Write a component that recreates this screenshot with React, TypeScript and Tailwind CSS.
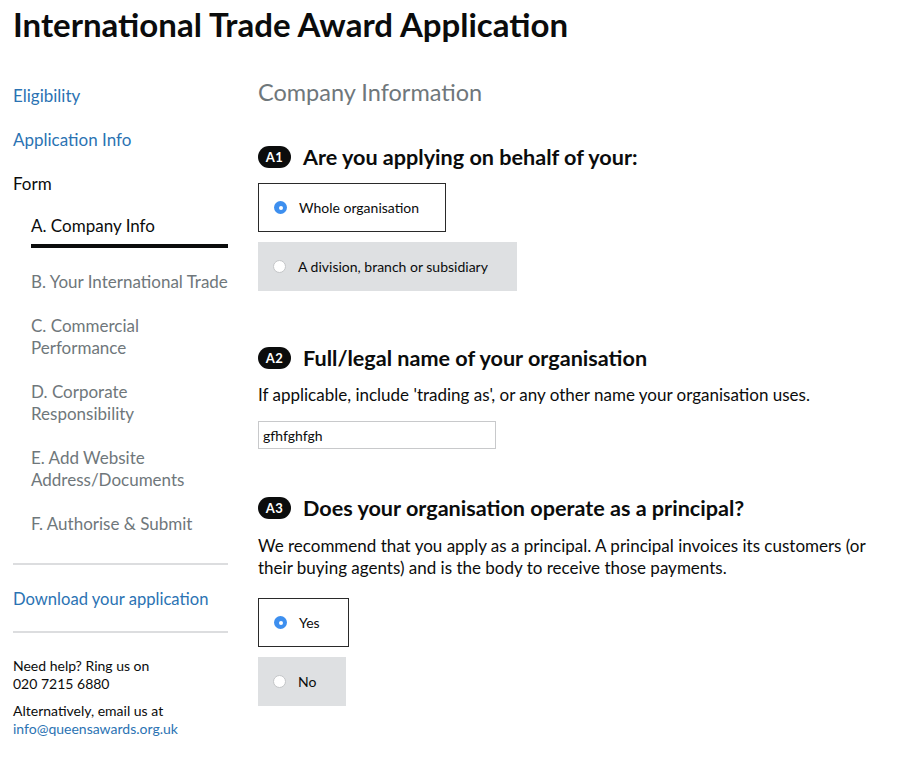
import React from "react";

const font = { fontFamily: 'Lato, "Noto Sans", "Liberation Sans", Arial, sans-serif' };

function Badge({ label }: { label: string }) {
  return (
    <span className="inline-flex h-[22px] w-[33px] items-center justify-center rounded-full bg-[#0b0c0c] text-[13px] font-bold leading-none tracking-[0.5px] text-white">
      {label}
    </span>
  );
}

function Radio({ checked }: { checked: boolean }) {
  return checked ? (
    <span className="flex h-[13px] w-[13px] items-center justify-center rounded-full bg-[#3d8fef]">
      <span className="h-[4px] w-[4px] rounded-full bg-white" />
    </span>
  ) : (
    <span className="h-[13px] w-[13px] rounded-full border border-[#c4c6c8] bg-white" />
  );
}

function Option({ label, checked, width }: { label: string; checked: boolean; width: string }) {
  return (
    <div
      className={
        "flex h-[49px] items-center gap-[12px] pl-[15px] text-[14px] text-[#0b0c0c] " +
        width +
        (checked ? " border border-[#2a2a2a] bg-white" : " bg-[#dee0e2]")
      }
    >
      <Radio checked={checked} />
      <span>{label}</span>
    </div>
  );
}

function Question({ badge, text }: { badge: string; text: string }) {
  return (
    <div className="flex h-[28px] items-center gap-[12px]">
      <Badge label={badge} />
      <span className="text-[21.6px] font-bold leading-[28px] text-[#0b0c0c]">{text}</span>
    </div>
  );
}

export default function App() {
  return (
    <div className="h-[761px] w-[900px] overflow-hidden bg-white text-[#0b0c0c]" style={font}>
      <h1 className="pl-[13px] pt-[4px] text-[33px] font-bold leading-[40px]">
        International Trade Award Application
      </h1>
      <div className="flex pt-[16px]">
        <nav className="ml-[13px] w-[215px] shrink-0">
          <div className="mt-[24px] text-[17px] leading-[24px] text-[#2b73b3]">Eligibility</div>
          <div className="mt-[20px] text-[17px] leading-[24px] text-[#2b73b3]">Application Info</div>
          <div className="mt-[20px] text-[17px] leading-[24px]">Form</div>
          <div className="ml-[18px]">
            <div className="mt-[18px] text-[17px] leading-[24px]">A. Company Info</div>
            <div className="mt-[6px] h-[4px] bg-[#0b0c0c]" />
            <div className="mt-[23px] whitespace-nowrap text-[17px] leading-[22px] text-[#6f777b]">B. Your International Trade</div>
            <div className="mt-[22px] text-[17px] leading-[22px] text-[#6f777b]">
              C. Commercial
              <br />
              Performance
            </div>
            <div className="mt-[22px] text-[17px] leading-[22px] text-[#6f777b]">
              D. Corporate
              <br />
              Responsibility
            </div>
            <div className="mt-[22px] text-[17px] leading-[22px] text-[#6f777b]">
              E. Add Website
              <br />
              Address/Documents
            </div>
            <div className="mt-[22px] text-[17px] leading-[22px] text-[#6f777b]">F. Authorise &amp; Submit</div>
          </div>
          <div className="mt-[28px] h-[2px] bg-[#dcdddf]" />
          <div className="mt-[22px] text-[16.6px] leading-[24px] text-[#2b73b3]">Download your application</div>
          <div className="mt-[20px] h-[2px] bg-[#dcdddf]" />
          <div className="mt-[24px] text-[14px] leading-[18px]">
            Need help? Ring us on
            <br />
            020 7215 6880
          </div>
          <div className="mt-[9px] text-[14px] leading-[18px]">
            Alternatively, email us at
            <br />
            <span className="text-[#2b73b3]">info@queensawards.org.uk</span>
          </div>
        </nav>
        <main className="ml-[30px] flex-1">
          <div className="mt-[16px] text-[23.5px] leading-[32px] text-[#6f777b]">Company Information</div>
          <div className="mt-[35px]">
            <Question badge="A1" text="Are you applying on behalf of your:" />
          </div>
          <div className="mt-[12px] flex flex-col gap-[10px]">
            <Option label="Whole organisation" checked={true} width="w-[188px]" />
            <Option label="A division, branch or subsidiary" checked={false} width="w-[259px]" />
          </div>
          <div className="mt-[53px]">
            <Question badge="A2" text="Full/legal name of your organisation" />
          </div>
          <p className="mt-[11px] text-[17px] leading-[24px]">
            If applicable, include 'trading as', or any other name your organisation uses.
          </p>
          <div className="mt-[14px] flex h-[28px] w-[238px] items-center border border-[#c8c9cb] px-[4px] text-[14px]">
            gfhfghfgh
          </div>
          <div className="mt-[45px]">
            <Question badge="A3" text="Does your organisation operate as a principal?" />
          </div>
          <p className="mt-[13px] w-[610px] text-[17px] leading-[22px]">
            We recommend that you apply as a principal. A principal invoices its customers (or their buying agents) and is the body to receive those payments.
          </p>
          <div className="mt-[19px] flex flex-col gap-[10px]">
            <Option label="Yes" checked={true} width="w-[91px]" />
            <Option label="No" checked={false} width="w-[88px]" />
          </div>
        </main>
      </div>
    </div>
  );
}
